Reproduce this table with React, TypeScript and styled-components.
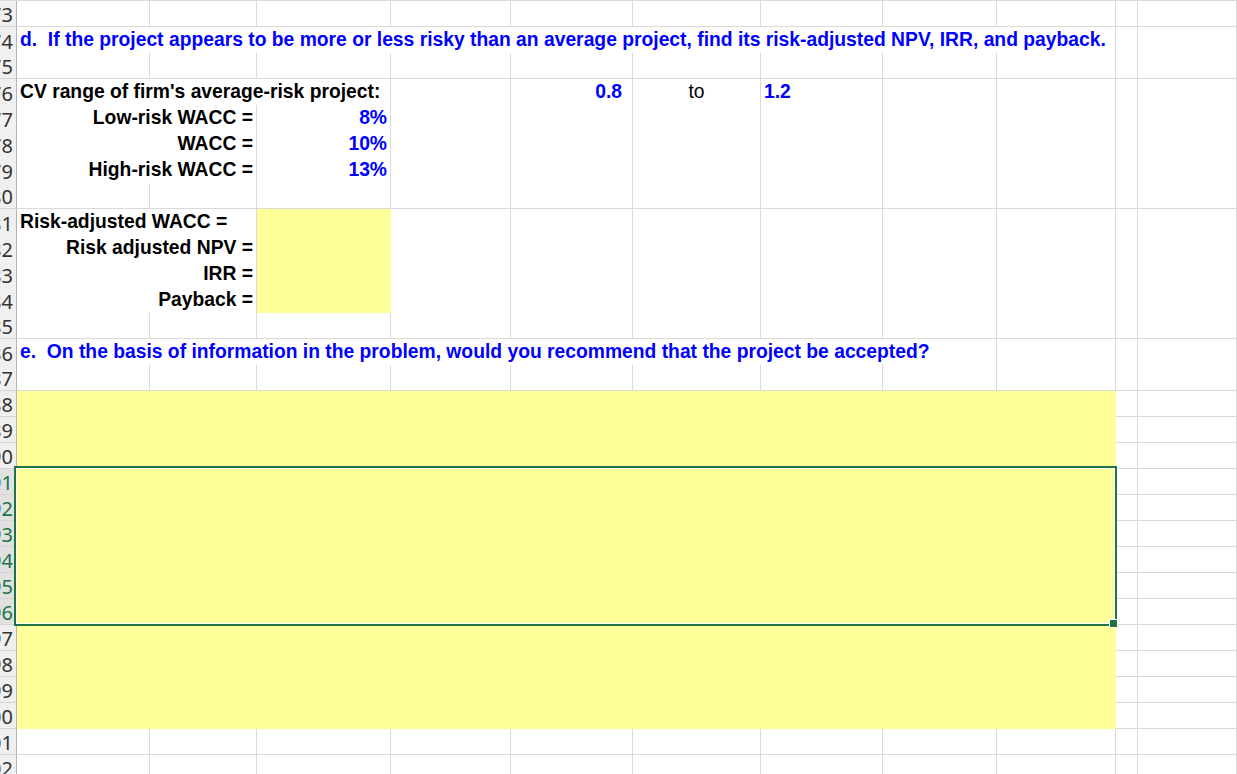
import React from 'react';
import styled, { createGlobalStyle } from 'styled-components';

// sheet rows 73..102, cols A..K after the row header
const GlobalStyle = createGlobalStyle`
  html, body { margin: 0; padding: 0; background: #fff; overflow: hidden; }
  body { font-family: "Liberation Sans", Arial, sans-serif; }
`;

const GRID = '#dadada';
const YELLOW = '#ffff99';
const BLUE = '#0000ff';
const COLS = '17px 133px 107px 134px 120px 122px 128px 122px 114px 119px 22px 1fr';

const Sheet = styled.div`
  position: relative;
  width: 1237px;
  height: 774px;
  overflow: hidden;
  border-top: 1px solid ${GRID};
  box-sizing: border-box;
`;

const Row = styled.div`
  display: grid;
  grid-template-columns: ${COLS};
  height: 26px;
`;

const RowHead = styled.div<{ $selected?: boolean }>`
  box-sizing: border-box;
  display: flex;
  justify-content: flex-end;
  align-items: center;
  overflow: hidden;
  padding: 2px 3px 0 0;
  background: ${p => (p.$selected ? '#e1e1e1' : '#f0f0f0')};
  color: ${p => (p.$selected ? '#217346' : '#333')};
  border-right: 1px solid #b5b5b5;
  border-bottom: 1px solid #d4d4d4;
  font-family: "Noto Sans", "Open Sans", sans-serif;
  font-size: 20px;
  line-height: 23px;
`;

type Align = 'left' | 'right' | 'center';

const Cell = styled.div<{
  $span?: number;
  $align?: Align;
  $fill?: boolean;
  $blue?: boolean;
  $bold?: boolean;
  $padRight?: number;
}>`
  box-sizing: border-box;
  grid-column: span ${p => p.$span ?? 1};
  border-right: 1px solid ${p => (p.$fill ? YELLOW : GRID)};
  border-bottom: 1px solid ${p => (p.$fill ? YELLOW : GRID)};
  background: ${p => (p.$fill ? YELLOW : '#fff')};
  padding: 0 ${p => p.$padRight ?? 3}px 0 3px;
  white-space: pre;
  overflow: visible;
  text-align: ${p => p.$align ?? 'left'};
  color: ${p => (p.$blue ? BLUE : '#000')};
  font-weight: ${p => (p.$bold ? 700 : 400)};
  font-size: 19.3px;
  line-height: 26px;
`;

const Selection = styled.div`
  position: absolute;
  left: 14px;
  top: 465px;
  width: 1103px;
  height: 160px;
  box-sizing: border-box;
  border: 2px solid #217346;
  box-shadow: inset 0 0 0 1px #fff;
  pointer-events: none;
`;

const FillHandle = styled.div`
  position: absolute;
  left: 1109px;
  top: 618px;
  width: 9px;
  height: 9px;
  box-sizing: border-box;
  background: #217346;
  border: 1px solid #fff;
`;

type CellSpec = {
  text?: string;
  span?: number;
  align?: Align;
  fill?: boolean;
  blue?: boolean;
  bold?: boolean;
  padRight?: number;
};

const label = (text: string): CellSpec => ({ text, span: 2, align: 'right', bold: true });
const pct = (text: string): CellSpec => ({ text, align: 'right', blue: true, bold: true });

const rows: Record<number, CellSpec[]> = {
  74: [{ text: 'd.  If the project appears to be more or less risky than an average project, find its risk-adjusted NPV, IRR, and payback.', span: 9, blue: true, bold: true }],
  76: [
    { text: "CV range of firm's average-risk project:", span: 3, bold: true },
    {},
    { text: '0.8', align: 'right', blue: true, bold: true, padRight: 10 },
    { text: 'to', align: 'center' },
    { text: '1.2', blue: true, bold: true },
  ],
  77: [label('Low-risk WACC ='), pct('8%')],
  78: [label('WACC ='), pct('10%')],
  79: [label('High-risk WACC ='), pct('13%')],
  81: [{ text: 'Risk-adjusted WACC =', span: 2, bold: true }, { fill: true }],
  82: [label('Risk adjusted NPV ='), { fill: true }],
  83: [label('IRR ='), { fill: true }],
  84: [label('Payback ='), { fill: true }],
  86: [{ text: 'e.  On the basis of information in the problem, would you recommend that the project be accepted?', span: 8, blue: true, bold: true }],
};

for (let r = 88; r <= 100; r++) rows[r] = [{ span: 9, fill: true }];

const TOTAL_COLS = 11;

const SheetRow: React.FC<{ n: number }> = ({ n }) => {
  const cells = rows[n] ?? [];
  const used = cells.reduce((s, c) => s + (c.span ?? 1), 0);
  const rest = Array.from({ length: TOTAL_COLS - used }, () => ({} as CellSpec));
  return (
    <Row>
      <RowHead $selected={n >= 91 && n <= 96}>{n}</RowHead>
      {[...cells, ...rest].map((c, i) => (
        <Cell
          key={i}
          $span={c.span}
          $align={c.align}
          $fill={c.fill}
          $blue={c.blue}
          $bold={c.bold}
          $padRight={c.padRight}
        >
          {c.text}
        </Cell>
      ))}
    </Row>
  );
};

export default function App() {
  const nums = Array.from({ length: 30 }, (_, i) => 73 + i);
  return (
    <>
      <GlobalStyle />
      <Sheet>
        {nums.map(n => (
          <SheetRow key={n} n={n} />
        ))}
        <Selection />
        <FillHandle />
      </Sheet>
    </>
  );
}
